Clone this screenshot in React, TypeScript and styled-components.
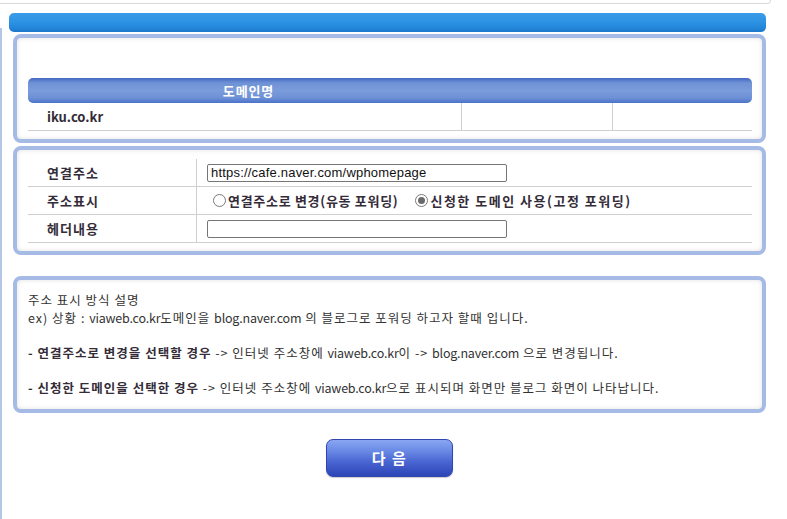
import React from "react";
import styled, { createGlobalStyle } from "styled-components";

const Global = createGlobalStyle`
  html, body { margin: 0; padding: 0; background: #fff; }
  body { font-family: "Noto Sans CJK KR", "Noto Sans", sans-serif; color: #333; font-size: 12px; }
`;

const Page = styled.div`
  width: 787px;
  height: 519px;
  overflow: hidden;
`;

const TopStub = styled.div`
  width: 770px;
  height: 3px;
  border-bottom: 1px solid #d9d9d9;
  border-right: 1px solid #d9d9d9;
  border-bottom-right-radius: 4px;
`;

const TopBar = styled.div`
  margin: 9px 0 0 9px;
  width: 757px;
  height: 19px;
  border-radius: 5px;
  background: linear-gradient(to bottom, #3b9ce8 0%, #2d93e4 45%, #2388db 75%, #1d79cc 100%);
`;

const Frame = styled.div`
  border-left: 2px solid #b3c6e6;
  margin-top: -4px;
  padding: 6px 0 0 11px;
  min-height: 500px;
`;

const Panel = styled.div<{ $gap?: number }>`
  width: 745px;
  margin-top: ${(p) => p.$gap ?? 0}px;
  border: 4px solid #a5bae4;
  border-radius: 8px;
  background: #fff;
  box-shadow: inset 0 0 5px rgba(0, 0, 0, 0.12);
`;

const PanelBody = styled.div<{ $pt: number; $pb: number }>`
  padding: ${(p) => p.$pt}px 10px ${(p) => p.$pb}px 11px;
`;

const DomainGrid = styled.div`
  display: grid;
  grid-template-columns: 433px 151px 1fr;
`;

const HeadRow = styled.div`
  grid-column: 1 / -1;
  display: grid;
  grid-template-columns: subgrid;
  height: 25px;
  border-radius: 5px;
  background: linear-gradient(to bottom, #4369c2 0%, #6f92d6 20%, #7b9cdb 50%, #6d90d6 80%, #4a73c8 100%);
`;

const HeadCell = styled.div`
  display: flex;
  align-items: center;
  justify-content: center;
  padding-left: 8px;
  color: #fff;
  font-weight: bold;
  font-size: 13px;
  letter-spacing: 0.9px;
`;

const DataCell = styled.div<{ $sep?: boolean }>`
  height: 27px;
  border-bottom: 1px solid #cfcfcf;
  border-left: ${(p) => (p.$sep ? "1px solid #cfcfcf" : "none")};
  display: flex;
  align-items: center;
  padding-left: 19px;
  font-weight: bold;
  font-size: 13px;
  color: #342c38;
`;

const FormGrid = styled.div`
  display: grid;
  grid-template-columns: 169px 1fr;
`;

const Label = styled.div`
  height: 27px;
  border-bottom: 1px solid #cfcfcf;
  border-right: 1px solid #cfcfcf;
  display: flex;
  align-items: center;
  padding-left: 19px;
  font-weight: bold;
  font-size: 13px;
  letter-spacing: 1px;
  color: #342c38;
`;

const Field = styled.div`
  height: 27px;
  border-bottom: 1px solid #cfcfcf;
  display: flex;
  align-items: center;
  padding-left: 10px;
`;

const TextInput = styled.input`
  box-sizing: border-box;
  width: 300px;
  height: 18px;
  border: 1px solid #767676;
  border-radius: 2px;
  padding: 0 3px;
  font-family: "Liberation Sans", Arial, sans-serif;
  font-size: 13px;
  letter-spacing: 0.2px;
  color: #111;
  outline: none;
`;

const RadioLabel = styled.label<{ $ml?: number; $ls: number }>`
  display: inline-flex;
  align-items: center;
  margin-left: ${(p) => p.$ml ?? 0}px;
  font-weight: bold;
  font-size: 13px;
  color: #342c38;
  letter-spacing: ${(p) => p.$ls}px;
`;

const Radio = styled.input`
  appearance: none;
  width: 13px;
  height: 13px;
  margin: 0 2px 0 6px;
  border: 1px solid #7a7a7a;
  border-radius: 50%;
  background: #fff;
  position: relative;
  &:checked::after {
    content: "";
    position: absolute;
    left: 2px;
    top: 2px;
    width: 7px;
    height: 7px;
    border-radius: 50%;
    background: #6a6a6a;
  }
`;

const Desc = styled.div`
  font-family: "Noto Sans CJK KR", sans-serif;
  font-size: 12.5px;
  letter-spacing: 1px;
  line-height: 17.6px;
  color: #333;
  padding-top: 11px;
  padding-bottom: 12px;
`;

const Line = styled.div``;

const Latin = styled.span`
  letter-spacing: -0.2px;
`;

const Strong = styled.b`
  color: #342c38;
  font-weight: bold;
`;

const Center = styled.div`
  width: 753px;
  display: flex;
  justify-content: center;
  margin-top: 26px;
`;

const NextButton = styled.button`
  width: 127px;
  height: 38px;
  border: 1px solid #3046b0;
  border-radius: 7px;
  background: linear-gradient(to bottom, #8aa6f2 0%, #6a8ae6 30%, #4a66d2 60%, #2c44b6 100%);
  color: #fff;
  font-family: "Noto Sans CJK KR", sans-serif;
  font-weight: bold;
  font-size: 15px;
  letter-spacing: 1.5px;
  box-shadow: 0 1px 1px rgba(0, 0, 0, 0.2);
  cursor: pointer;
`;

export default function App() {
  return (
    <Page>
      <Global />
      <TopStub />
      <TopBar />
      <Frame>
        <Panel>
          <PanelBody $pt={40} $pb={8}>
            <DomainGrid>
              <HeadRow>
                <HeadCell>도메인명</HeadCell>
                <HeadCell />
                <HeadCell />
              </HeadRow>
              <DataCell>iku.co.kr</DataCell>
              <DataCell $sep />
              <DataCell $sep />
            </DomainGrid>
          </PanelBody>
        </Panel>
        <Panel $gap={3}>
          <PanelBody $pt={9} $pb={8}>
            <FormGrid>
              <Label>연결주소</Label>
              <Field>
                <TextInput defaultValue="https://cafe.naver.com/wphomepage" />
              </Field>
              <Label>주소표시</Label>
              <Field>
                <RadioLabel $ls={0.7}>
                  <Radio type="radio" name="mode" />
                  연결주소로 변경(유동 포워딩)
                </RadioLabel>
                <RadioLabel $ml={11} $ls={1.5}>
                  <Radio type="radio" name="mode" defaultChecked />
                  신청한 도메인 사용(고정 포워딩)
                </RadioLabel>
              </Field>
              <Label>헤더내용</Label>
              <Field>
                <TextInput defaultValue="" />
              </Field>
            </FormGrid>
          </PanelBody>
        </Panel>
        <Panel $gap={21}>
          <PanelBody $pt={0} $pb={0}>
            <Desc>
              <Line>주소 표시 방식 설명</Line>
              <Line>
                ex) 상황 : <Latin>viaweb.co.kr</Latin>도메인을 <Latin>blog.naver.com</Latin> 의 블로그로 포워딩 하고자 할때 입니다.
              </Line>
              <Line>&nbsp;</Line>
              <Line>
                <Strong>- 연결주소로 변경을 선택할 경우</Strong> -&gt; 인터넷 주소창에 <Latin>viaweb.co.kr</Latin>이 -&gt; <Latin>blog.naver.com</Latin> 으로 변경됩니다.
              </Line>
              <Line>&nbsp;</Line>
              <Line>
                <Strong>- 신청한 도메인을 선택한 경우</Strong> -&gt; 인터넷 주소창에 <Latin>viaweb.co.kr</Latin>으로 표시되며 화면만 블로그 화면이 나타납니다.
              </Line>
            </Desc>
          </PanelBody>
        </Panel>
        <Center>
          <NextButton>다 음</NextButton>
        </Center>
      </Frame>
    </Page>
  );
}
